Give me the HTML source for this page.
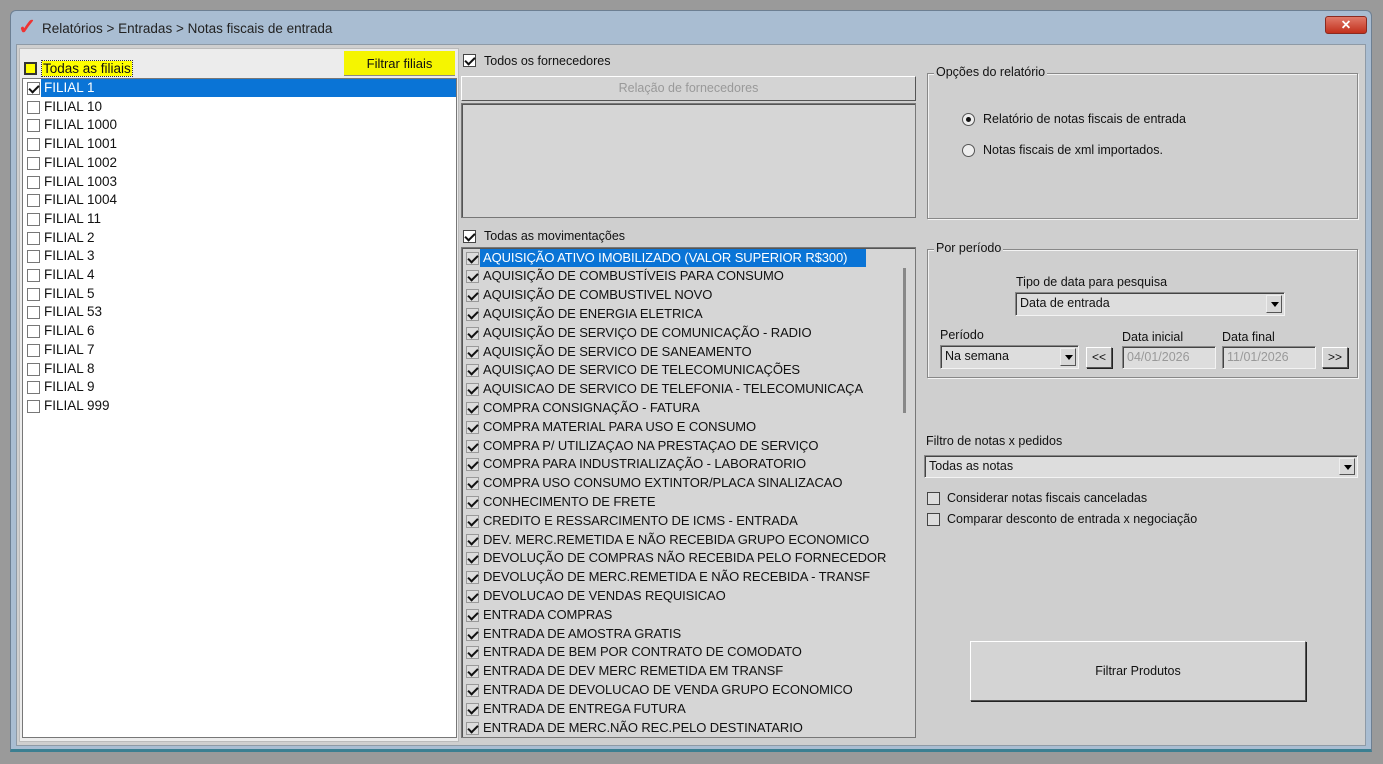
<!DOCTYPE html>
<html><head><meta charset="utf-8"><style>
*{box-sizing:border-box;margin:0;padding:0}
body{width:1383px;height:764px;background:#9a9a9a;font-family:"Liberation Sans",sans-serif;font-size:12.5px;color:#111;position:relative;overflow:hidden}
.a{position:absolute}
.win{left:10px;top:10px;width:1362px;height:742px;background:#a9bdd2;border:1px solid #6d7f92;border-radius:6px 6px 0 0;border-bottom:3px solid #3c7f91}
.content{left:16px;top:44px;width:1350px;height:702px;background:#cfcfcf;border:1px solid #8e9aa6}
.cb{width:13px;height:13px;border:1px solid #777;background:#fff;display:inline-block}
.row{position:absolute;left:4px;height:18px;line-height:18px;font-size:13.5px;white-space:nowrap}
.row .cb{position:absolute;left:0;top:3px}
.row span{position:absolute;left:16px;padding:0 1px}
.mv{font-size:13px;letter-spacing:-.1px}
.mv .cb{background:#ddd;border-color:#999}
.chk::after{content:"";position:absolute;left:3px;top:0px;width:4px;height:8px;border:solid #111;border-width:0 2px 2px 0;transform:rotate(45deg)}
.cb.chk{position:relative}
.grp{border:1px solid #888;box-shadow:inset 1px 1px #f3f3f3, 1px 1px #f3f3f3}
.lg{position:absolute;top:-9px;left:6px;background:#cfcfcf;padding:0 2px;font-size:12.5px}
.inp{background:#ddd;border:1px solid #888;border-right-color:#f3f3f3;border-bottom-color:#f3f3f3;box-shadow:inset 1px 1px #444;font-size:12.5px;padding:3px 4px}
.dd{position:absolute;right:2px;top:2px;width:16px;bottom:2px;background:#d8d8d8;border:1px solid #eee;border-right-color:#555;border-bottom-color:#555}
.dd::after{content:"";position:absolute;left:4px;top:6px;border:4px solid transparent;border-top:5px solid #000}
.btn{background:#d4d4d4;border:1px solid #fff;border-right-color:#555;border-bottom-color:#555;box-shadow:1px 1px #222;text-align:center}
.rad{width:13px;height:13px;border-radius:50%;border:1px solid #555;background:#eee;display:inline-block;position:absolute}
</style></head><body>
<div class="a win"></div>
<div class="a" style="left:18px;top:17px;width:18px;height:20px;color:#e33;font-size:22px;font-weight:bold;line-height:20px">✓</div>
<div class="a" style="left:42px;top:21px;font-size:13.5px;color:#222">Relatórios &gt; Entradas &gt; Notas fiscais de entrada</div>
<div class="a" style="left:1325px;top:16px;width:42px;height:18px;background:linear-gradient(#e07a6a,#c2301c);border:1px solid #8a2a20;border-radius:3px;color:#fff;text-align:center;font-weight:bold;line-height:16px">✕</div>
<div class="a content"></div>
<div class="a" style="left:19px;top:48px;width:440px;height:694px;background:#ececec;border:1px solid #bbb"></div>
<div class="a" style="left:24px;top:62px;width:13px;height:13px;border:2px solid #333;background:#ff0"></div>
<div class="a" style="left:42px;top:61px;background:#ff0;outline:1px dotted #333;font-size:13.5px;padding:0 1px">Todas as filiais</div>
<div class="a" style="left:344px;top:51px;width:111px;height:25px;background:#f5f500;text-align:center;line-height:25px;font-size:13px;border-bottom:1px solid #888">Filtrar filiais</div>
<div class="a" style="left:22px;top:78px;width:435px;height:660px;background:#fff;border:1px solid #777">
<div class="a" style="left:18px;top:0px;width:415px;height:18px;background:#0a74d6"></div>
<div class="row" style="top:0"><i class="cb chk"></i><span style="color:#fff">FILIAL 1</span></div>
<div class="row" style="top:18.7px"><i class="cb"></i><span>FILIAL 10</span></div>
<div class="row" style="top:37.4px"><i class="cb"></i><span>FILIAL 1000</span></div>
<div class="row" style="top:56.1px"><i class="cb"></i><span>FILIAL 1001</span></div>
<div class="row" style="top:74.8px"><i class="cb"></i><span>FILIAL 1002</span></div>
<div class="row" style="top:93.5px"><i class="cb"></i><span>FILIAL 1003</span></div>
<div class="row" style="top:112.2px"><i class="cb"></i><span>FILIAL 1004</span></div>
<div class="row" style="top:130.9px"><i class="cb"></i><span>FILIAL 11</span></div>
<div class="row" style="top:149.6px"><i class="cb"></i><span>FILIAL 2</span></div>
<div class="row" style="top:168.3px"><i class="cb"></i><span>FILIAL 3</span></div>
<div class="row" style="top:187px"><i class="cb"></i><span>FILIAL 4</span></div>
<div class="row" style="top:205.7px"><i class="cb"></i><span>FILIAL 5</span></div>
<div class="row" style="top:224.4px"><i class="cb"></i><span>FILIAL 53</span></div>
<div class="row" style="top:243.1px"><i class="cb"></i><span>FILIAL 6</span></div>
<div class="row" style="top:261.8px"><i class="cb"></i><span>FILIAL 7</span></div>
<div class="row" style="top:280.5px"><i class="cb"></i><span>FILIAL 8</span></div>
<div class="row" style="top:299.2px"><i class="cb"></i><span>FILIAL 9</span></div>
<div class="row" style="top:317.9px"><i class="cb"></i><span>FILIAL 999</span></div>
</div>
<div class="a" style="left:463px;top:54px"><i class="cb chk" style="border-color:#444"></i></div>
<div class="a" style="left:484px;top:54px">Todos os fornecedores</div>
<div class="a btn" style="left:461px;top:76px;width:455px;height:25px;line-height:23px;color:#999;box-shadow:none">Relação de fornecedores</div>
<div class="a" style="left:461px;top:103px;width:455px;height:115px;background:#d6d6d6;border:1px solid #777;box-shadow:inset 1px 1px #555"></div>
<div class="a" style="left:463px;top:230px"><i class="cb chk" style="border-color:#444"></i></div>
<div class="a" style="left:484px;top:229px">Todas as movimentações</div>
<div class="a" style="left:461px;top:247px;width:455px;height:491px;background:#d6d6d6;border:1px solid #777;box-shadow:inset 1px 1px #555;overflow:hidden">
<div class="a" style="left:18px;top:1px;width:386px;height:18px;background:#0a74d6"></div>
<div class="a" style="left:441px;top:20px;width:3px;height:145px;background:#888"></div>
<div class="row mv" style="top:0.5px"><i class="cb chk"></i><span style="color:#fff">AQUISIÇÃO ATIVO IMOBILIZADO (VALOR SUPERIOR R$300)</span></div>
<div class="row mv" style="top:19.3px"><i class="cb chk"></i><span>AQUISIÇÃO DE COMBUSTÍVEIS PARA CONSUMO</span></div>
<div class="row mv" style="top:38.1px"><i class="cb chk"></i><span>AQUISIÇÃO DE COMBUSTIVEL NOVO</span></div>
<div class="row mv" style="top:56.9px"><i class="cb chk"></i><span>AQUISIÇÃO DE ENERGIA ELETRICA</span></div>
<div class="row mv" style="top:75.7px"><i class="cb chk"></i><span>AQUISIÇÃO DE SERVIÇO DE COMUNICAÇÃO - RADIO</span></div>
<div class="row mv" style="top:94.5px"><i class="cb chk"></i><span>AQUISIÇÃO DE SERVICO DE SANEAMENTO</span></div>
<div class="row mv" style="top:113.3px"><i class="cb chk"></i><span>AQUISIÇAO DE SERVICO DE TELECOMUNICAÇÕES</span></div>
<div class="row mv" style="top:132.1px"><i class="cb chk"></i><span>AQUISICAO DE SERVICO DE TELEFONIA - TELECOMUNICAÇA</span></div>
<div class="row mv" style="top:150.9px"><i class="cb chk"></i><span>COMPRA CONSIGNAÇÃO - FATURA</span></div>
<div class="row mv" style="top:169.7px"><i class="cb chk"></i><span>COMPRA MATERIAL PARA USO E CONSUMO</span></div>
<div class="row mv" style="top:188.5px"><i class="cb chk"></i><span>COMPRA P/ UTILIZAÇAO NA PRESTAÇAO DE SERVIÇO</span></div>
<div class="row mv" style="top:207.3px"><i class="cb chk"></i><span>COMPRA PARA INDUSTRIALIZAÇÃO - LABORATORIO</span></div>
<div class="row mv" style="top:226.1px"><i class="cb chk"></i><span>COMPRA USO CONSUMO EXTINTOR/PLACA SINALIZACAO</span></div>
<div class="row mv" style="top:244.9px"><i class="cb chk"></i><span>CONHECIMENTO DE FRETE</span></div>
<div class="row mv" style="top:263.7px"><i class="cb chk"></i><span>CREDITO E RESSARCIMENTO DE ICMS - ENTRADA</span></div>
<div class="row mv" style="top:282.5px"><i class="cb chk"></i><span>DEV. MERC.REMETIDA E NÃO RECEBIDA GRUPO ECONOMICO</span></div>
<div class="row mv" style="top:301.3px"><i class="cb chk"></i><span>DEVOLUÇÃO DE COMPRAS NÃO RECEBIDA PELO FORNECEDOR</span></div>
<div class="row mv" style="top:320.1px"><i class="cb chk"></i><span>DEVOLUÇÃO DE MERC.REMETIDA E NÃO RECEBIDA - TRANSF</span></div>
<div class="row mv" style="top:338.9px"><i class="cb chk"></i><span>DEVOLUCAO DE VENDAS REQUISICAO</span></div>
<div class="row mv" style="top:357.7px"><i class="cb chk"></i><span>ENTRADA COMPRAS</span></div>
<div class="row mv" style="top:376.5px"><i class="cb chk"></i><span>ENTRADA DE AMOSTRA GRATIS</span></div>
<div class="row mv" style="top:395.3px"><i class="cb chk"></i><span>ENTRADA DE BEM POR CONTRATO DE COMODATO</span></div>
<div class="row mv" style="top:414.1px"><i class="cb chk"></i><span>ENTRADA DE DEV MERC REMETIDA EM TRANSF</span></div>
<div class="row mv" style="top:432.9px"><i class="cb chk"></i><span>ENTRADA DE DEVOLUCAO DE VENDA GRUPO ECONOMICO</span></div>
<div class="row mv" style="top:451.7px"><i class="cb chk"></i><span>ENTRADA DE ENTREGA FUTURA</span></div>
<div class="row mv" style="top:470.5px"><i class="cb chk"></i><span>ENTRADA DE MERC.NÃO REC.PELO DESTINATARIO</span></div>
</div>
<div class="a grp" style="left:927px;top:73px;width:431px;height:146px"><div class="lg">Opções do relatório</div>
<i class="rad" style="left:34px;top:39px"><i style="position:absolute;left:3px;top:3px;width:5px;height:5px;border-radius:50%;background:#111"></i></i>
<div class="a" style="left:55px;top:38px">Relatório de notas fiscais de entrada</div>
<i class="rad" style="left:34px;top:70px"></i>
<div class="a" style="left:55px;top:69px">Notas fiscais de xml importados.</div>
</div>
<div class="a grp" style="left:927px;top:249px;width:431px;height:129px"><div class="lg">Por período</div>
<div class="a" style="left:88px;top:25px">Tipo de data para pesquisa</div>
<div class="a inp" style="left:87px;top:42px;width:270px;height:24px">Data de entrada<i class="dd"></i></div>
<div class="a" style="left:12px;top:78px">Período</div>
<div class="a inp" style="left:12px;top:95px;width:139px;height:24px">Na semana<i class="dd"></i></div>
<div class="a btn" style="left:158px;top:97px;width:26px;height:21px;line-height:19px;font-size:12px">&lt;&lt;</div>
<div class="a" style="left:194px;top:80px">Data inicial</div>
<div class="a inp" style="left:194px;top:96px;width:94px;height:23px;color:#999">04/01/2026</div>
<div class="a" style="left:294px;top:80px">Data final</div>
<div class="a inp" style="left:294px;top:96px;width:94px;height:23px;color:#999">11/01/2026</div>
<div class="a btn" style="left:394px;top:97px;width:26px;height:21px;line-height:19px;font-size:12px">&gt;&gt;</div>
</div>
<div class="a" style="left:926px;top:434px">Filtro de notas x pedidos</div>
<div class="a inp" style="left:924px;top:455px;width:434px;height:23px">Todas as notas<i class="dd"></i></div>
<i class="a cb" style="left:927px;top:492px;background:#ddd;border-color:#444"></i>
<div class="a" style="left:947px;top:491px">Considerar notas fiscais canceladas</div>
<i class="a cb" style="left:927px;top:513px;background:#ddd;border-color:#444"></i>
<div class="a" style="left:947px;top:512px">Comparar desconto de entrada x negociação</div>
<div class="a btn" style="left:970px;top:641px;width:336px;height:60px;line-height:58px">Filtrar Produtos</div>
</body></html>
